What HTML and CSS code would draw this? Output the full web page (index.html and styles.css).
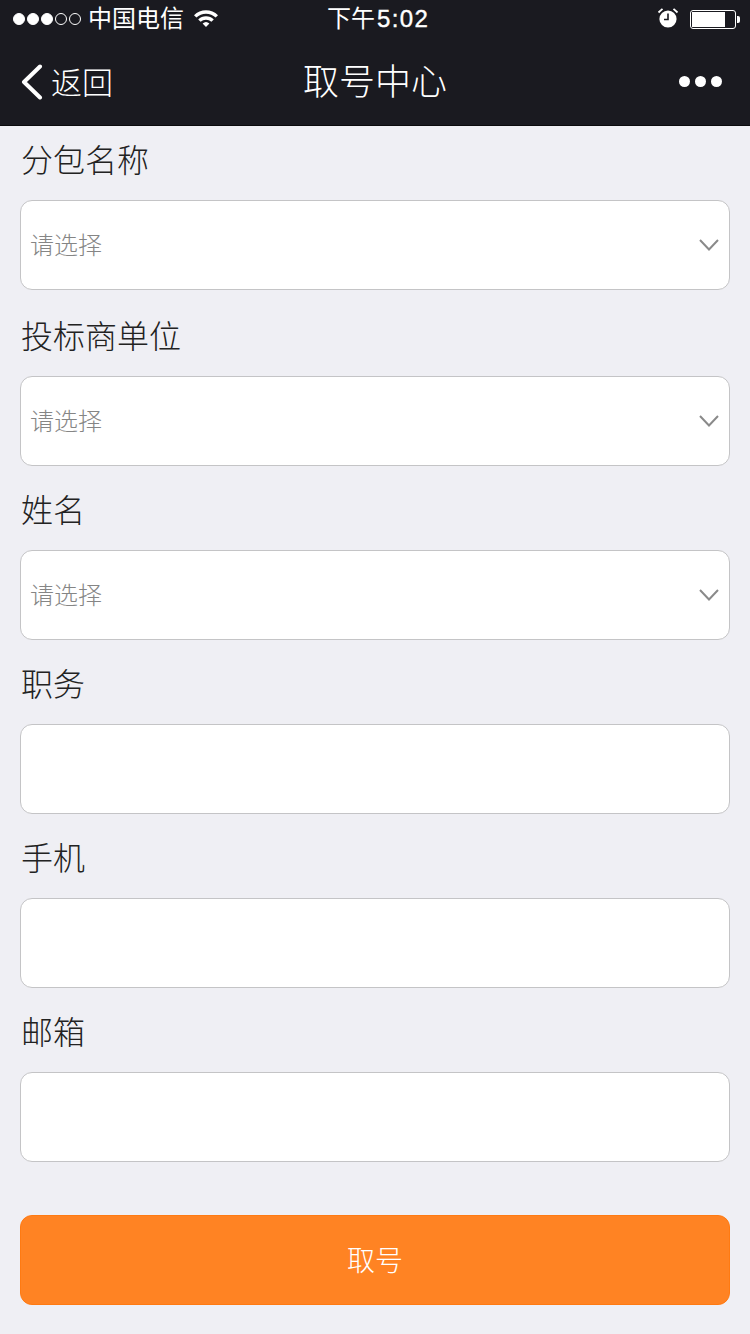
FILE: index.html
```html
<!DOCTYPE html>
<html lang="zh">
<head>
    <meta charset="UTF-8">
    <meta name="viewport" content="width=device-width, initial-scale=1.0">
    <title>取号中心</title>
    <link rel="stylesheet" href="styles.css">
</head>
<body>

<div class="top">
    <!-- 状态栏 -->
    <div class="status">
        <div class="status-left">
            <span class="signal">
                <i class="on"></i><i class="on"></i><i class="on"></i><i></i><i></i>
            </span>
            <span class="carrier">中国电信</span>
            <svg class="wifi" width="24" height="18" viewBox="0 0 24 18">
                <path d="M0 6.2 A17 17 0 0 1 24 6.2 L21.6 8.6 A13.6 13.6 0 0 0 2.4 8.6 Z" fill="#fff"/>
                <path d="M4.2 10.4 A11 11 0 0 1 19.8 10.4 L17.4 12.8 A7.8 7.8 0 0 0 6.6 12.8 Z" fill="#fff"/>
                <path d="M8.6 14.6 A5 5 0 0 1 15.4 14.6 L12 18 Z" fill="#fff"/>
            </svg>
        </div>
        <div class="time">下午<span class="digits">5:02</span></div>
        <div class="status-right">
            <svg class="alarm" width="22" height="22" viewBox="0 0 22 22">
                <circle cx="11" cy="12" r="8.6" fill="#fff"/>
                <path d="M11 6.5 V12.5 H7" fill="none" stroke="#1a1a20" stroke-width="1.6"/>
                <path d="M1.5 5.5 L5.5 1.8 M20.5 5.5 L16.5 1.8" stroke="#fff" stroke-width="1.8"/>
            </svg>
            <div class="battery"><div class="battery-fill"></div></div>
            <div class="battery-cap"></div>
        </div>
    </div>

    <!-- 导航栏 -->
    <div class="nav">
        <div class="back">
            <svg width="24" height="36" viewBox="0 0 24 36">
                <path d="M20 2.5 L4 18 L20 33.5" fill="none" stroke="#fff" stroke-width="4" stroke-linecap="round" stroke-linejoin="round"/>
            </svg>
            <span>返回</span>
        </div>
        <div class="title">取号中心</div>
        <div class="more"><i></i><i></i><i></i></div>
    </div>
</div>

<form class="form">
    <div class="field field-first">
        <div class="label">分包名称</div>
        <div class="box">
            <span class="placeholder">请选择</span>
            <svg class="arrow" width="20" height="12" viewBox="0 0 20 12"><path d="M1 1 L10 10.5 L19 1" fill="none" stroke="#8a8a8a" stroke-width="2"/></svg>
        </div>
    </div>
    <div class="field">
        <div class="label">投标商单位</div>
        <div class="box">
            <span class="placeholder">请选择</span>
            <svg class="arrow" width="20" height="12" viewBox="0 0 20 12"><path d="M1 1 L10 10.5 L19 1" fill="none" stroke="#8a8a8a" stroke-width="2"/></svg>
        </div>
    </div>
    <div class="field">
        <div class="label">姓名</div>
        <div class="box">
            <span class="placeholder">请选择</span>
            <svg class="arrow" width="20" height="12" viewBox="0 0 20 12"><path d="M1 1 L10 10.5 L19 1" fill="none" stroke="#8a8a8a" stroke-width="2"/></svg>
        </div>
    </div>
    <div class="field">
        <div class="label">职务</div>
        <div class="box"></div>
    </div>
    <div class="field">
        <div class="label">手机</div>
        <div class="box"></div>
    </div>
    <div class="field">
        <div class="label">邮箱</div>
        <div class="box"></div>
    </div>
    <div class="submit">取号</div>
</form>

</body>
</html>
```

FILE: styles.css
```css
body {
    font-family: "Noto Sans CJK SC", "Liberation Sans", sans-serif;
    background-color: #efeff4;
    margin: 0;
}
.top {
    background-color: #1a1a20;
    color: #fff;
    height: 125px;
    border-bottom: 1px solid #0b0b0d;
}
.status {
    height: 38px;
    display: flex;
    align-items: center;
    justify-content: space-between;
    padding: 0 10px 0 13px;
    position: relative;
}
.status-left, .status-right {
    display: flex;
    align-items: center;
}
.signal {
    display: flex;
    gap: 2px;
}
.signal i {
    width: 10px;
    height: 10px;
    border: 1px solid #fff;
    border-radius: 50%;
}
.signal i.on {
    background-color: #fff;
}
.carrier {
    font-size: 24px;
    line-height: 34px;
    margin: 0 0 4px 7px;
}
.wifi {
    margin: 0 0 3px 10px;
}
.time {
    font-family: "Liberation Sans", "Noto Sans CJK SC", sans-serif;
    font-size: 24px;
    position: absolute;
    left: 327px;
    top: 2px;
    line-height: 34px;
}
.digits {
    letter-spacing: 1.4px;
    margin-left: 2px;
    -webkit-text-stroke: 0.4px #fff;
}
.alarm {
    margin: 0 11px 2px 0;
}
.battery {
    width: 46px;
    height: 19px;
    box-sizing: border-box;
    border: 1px solid #fff;
    border-radius: 3px;
    padding: 1px;
}
.battery-fill {
    width: 33px;
    height: 100%;
    background-color: #fff;
}
.battery-cap {
    width: 3px;
    height: 7px;
    margin-left: 1px;
    background-color: #fff;
    border-radius: 0 2px 2px 0;
}
.nav {
    height: 87px;
    display: flex;
    align-items: center;
    justify-content: space-between;
    padding: 0 28px 0 20px;
    position: relative;
}
.back {
    display: flex;
    align-items: center;
    font-size: 31px;
    font-weight: 300;
}
.back span {
    margin: 0 0 3px 7px;
}
.title {
    position: absolute;
    left: 0;
    right: 0;
    top: 16px;
    line-height: 50px;
    text-align: center;
    font-size: 36px;
    font-weight: 300;
    pointer-events: none;
}
.more {
    display: flex;
    gap: 5px;
}
.more i {
    width: 11px;
    height: 11px;
    background-color: #fff;
    border-radius: 50%;
}
.form {
    padding: 9px 20px 0;
}
.field {
    margin-bottom: 19px;
}
.field-first {
    margin-bottom: 21px;
}
.label {
    height: 50px;
    line-height: 46px;
    margin-bottom: 15px;
    padding-left: 1px;
    font-size: 32px;
    font-weight: 300;
    color: #222;
}
.box {
    height: 90px;
    box-sizing: border-box;
    background-color: #fff;
    border: 1px solid #c4c4c6;
    border-radius: 12px;
    display: flex;
    align-items: center;
    justify-content: space-between;
    padding: 0 10px 0 9px;
}
.placeholder {
    margin-bottom: 4px;
    font-size: 24px;
    font-weight: 300;
    color: #858585;
}
.submit {
    margin-top: 53px;
    height: 90px;
    box-sizing: border-box;
    line-height: 86px;
    text-align: center;
    font-size: 28px;
    font-weight: 300;
    color: #fff;
    background-color: #ff8323;
    border: 1px solid #ff7a12;
    border-radius: 12px;
}
```
